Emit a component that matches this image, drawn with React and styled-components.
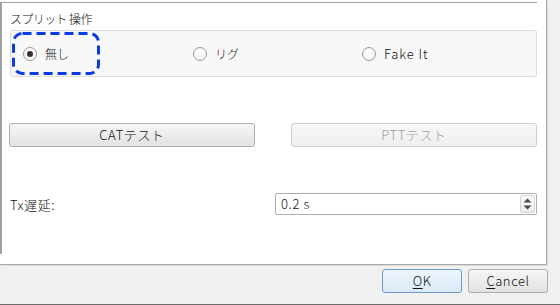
import styled, { createGlobalStyle } from "styled-components";

const GlobalStyle = createGlobalStyle`
  html, body {
    margin: 0;
    padding: 0;
    background: #f0f0f0;
  }
  body {
    font-family: "Noto Sans CJK JP", sans-serif;
    font-size: 12px;
    font-weight: 300;
    letter-spacing: 0.6px;
    color: #111;
  }
`;

const Window = styled.div`
  width: 560px;
  height: 305px;
  display: flex;
  flex-direction: column;
  box-sizing: border-box;
  background: #f0f0f0;
  border-bottom: 1px solid #6b6b6b;
  overflow: hidden;
`;

const Page = styled.div`
  width: 547px;
  height: 265px;
  flex: none;
  box-sizing: border-box;
  background: #fff;
  border-right: 1px solid #a9a9a9;
  border-bottom: 1px solid #a9a9a9;
  box-shadow: 1px 1px 0 #dadada;
`;

const Panel = styled.div`
  width: 537px;
  height: 252px;
  margin-top: 2px;
  box-sizing: border-box;
  border-top: 1px solid #a0a0a0;
  border-left: 2px solid #a0a0a0;
  padding: 7px 0 0 8px;
  display: flex;
  flex-direction: column;
`;

const SectionLabel = styled.div`
  line-height: 18px;
  height: 18px;
  letter-spacing: -0.6px;
`;

const GroupBox = styled.div`
  position: relative;
  margin-top: 2px;
  width: 527px;
  height: 47px;
  box-sizing: border-box;
  border: 1px solid #dddddd;
  border-radius: 2px;
  background: #f8f8f8;
  display: grid;
  grid-template-columns: 170px 169px 170px;
  align-items: center;
  padding-left: 12px;
`;

const RadioItem = styled.label`
  display: flex;
  align-items: center;
  gap: 8px;
  line-height: 16px;
  font-size: ${(p) => (p.$latin ? "13px" : "12px")};
  letter-spacing: ${(p) => (p.$latin ? "0.9px" : "0")};
`;

const RadioCircle = styled.span`
  width: 14px;
  height: 14px;
  box-sizing: border-box;
  border-radius: 50%;
  border: 1px solid #9a9a9a;
  background: radial-gradient(circle at 50% 40%, #ffffff 0%, #f0f0f0 100%);
  display: flex;
  align-items: center;
  justify-content: center;

  &::after {
    content: "";
    width: 6px;
    height: 6px;
    border-radius: 50%;
    background: ${(p) => (p.$checked ? "#333" : "transparent")};
  }
`;

const FocusRing = styled.svg`
  position: absolute;
  left: 1px;
  top: 1px;
  width: 88px;
  height: 43px;
  pointer-events: none;
`;

const ButtonRow = styled.div`
  margin-top: 46px;
  display: grid;
  grid-template-columns: 246px 246px;
  column-gap: 36px;
  margin-left: -1px;
`;

const Button = styled.div`
  height: 24px;
  box-sizing: border-box;
  border: 1px solid ${(p) => (p.$disabled ? "#cfcfcf" : "#adadad")};
  border-radius: 3px;
  background: ${(p) =>
    p.$disabled
      ? "linear-gradient(#f7f7f7, #efefef)"
      : "linear-gradient(#f6f6f6 0%, #ececec 50%, #e2e2e2 100%)"};
  color: ${(p) => (p.$disabled ? "#9c9c9c" : "#111")};
  display: flex;
  align-items: center;
  justify-content: center;
  line-height: 16px;
  font-size: 13px;
`;

const FieldRow = styled.div`
  margin-top: 46px;
  display: flex;
  align-items: center;
  justify-content: space-between;
  width: 527px;
  height: 22px;
  font-size: 13px;
`;

const SpinBox = styled.div`
  width: 262px;
  height: 22px;
  box-sizing: border-box;
  border: 1px solid #acacac;
  border-radius: 2px;
  background: #fff;
  display: flex;
  align-items: center;
  padding-left: 5px;
`;

const SpinValue = styled.span`
  flex: 1;
  line-height: 16px;
`;

const SpinButtons = styled.div`
  width: 15px;
  height: 18px;
  margin-right: 1px;
  box-sizing: border-box;
  border: 1px solid #d4d4d4;
  border-radius: 2px;
  background: linear-gradient(#fafafa, #ececec);
  display: flex;
  align-items: center;
  justify-content: center;
`;

const Footer = styled.div`
  flex: 1;
  display: flex;
  justify-content: flex-end;
  align-items: flex-start;
  gap: 6px;
  padding: 4px 12px 0 0;
`;

const DialogButton = styled.div`
  width: 80px;
  height: 24px;
  box-sizing: border-box;
  border: 1px solid ${(p) => (p.$default ? "#6a9bc8" : "#adadad")};
  border-radius: 3px;
  background: ${(p) =>
    p.$default
      ? "linear-gradient(#eef6fc 0%, #e3effa 50%, #d9e9f7 100%)"
      : "linear-gradient(#f6f6f6 0%, #ececec 50%, #e2e2e2 100%)"};
  display: flex;
  align-items: center;
  justify-content: center;
  line-height: 16px;
  font-size: 13px;

  u {
    text-decoration: underline;
    text-underline-offset: 2px;
  }
`;

const radios = [
  { label: "無し", checked: true },
  { label: "リグ", checked: false },
  { label: "Fake It", checked: false, latin: true },
];

export default function App() {
  return (
    <>
      <GlobalStyle />
      <Window>
        <Page>
          <Panel>
            <SectionLabel>スプリット 操作</SectionLabel>
            <GroupBox>
              {radios.map((r) => (
                <RadioItem key={r.label} $latin={r.latin}>
                  <RadioCircle $checked={r.checked} />
                  <span>{r.label}</span>
                </RadioItem>
              ))}
              <FocusRing viewBox="0 0 88 43">
                <rect
                  x="1.5"
                  y="1.5"
                  width="85"
                  height="40"
                  rx="9"
                  fill="none"
                  stroke="#0a3ce6"
                  strokeWidth="3"
                  strokeDasharray="9 5"
                />
              </FocusRing>
            </GroupBox>
            <ButtonRow>
              <Button>CATテスト</Button>
              <Button $disabled>PTTテスト</Button>
            </ButtonRow>
            <FieldRow>
              <span>Tx遅延:</span>
              <SpinBox>
                <SpinValue>0.2 s</SpinValue>
                <SpinButtons>
                  <svg width="9" height="12" viewBox="0 0 9 12">
                    <path d="M4.5 0.5 L8.5 4.5 L0.5 4.5 Z" fill="#4a4a4a" />
                    <path d="M0.5 7.5 L8.5 7.5 L4.5 11.5 Z" fill="#4a4a4a" />
                  </svg>
                </SpinButtons>
              </SpinBox>
            </FieldRow>
          </Panel>
        </Page>
        <Footer>
          <DialogButton $default>
            <span>
              <u>O</u>K
            </span>
          </DialogButton>
          <DialogButton>
            <span>
              <u>C</u>ancel
            </span>
          </DialogButton>
        </Footer>
      </Window>
    </>
  );
}
